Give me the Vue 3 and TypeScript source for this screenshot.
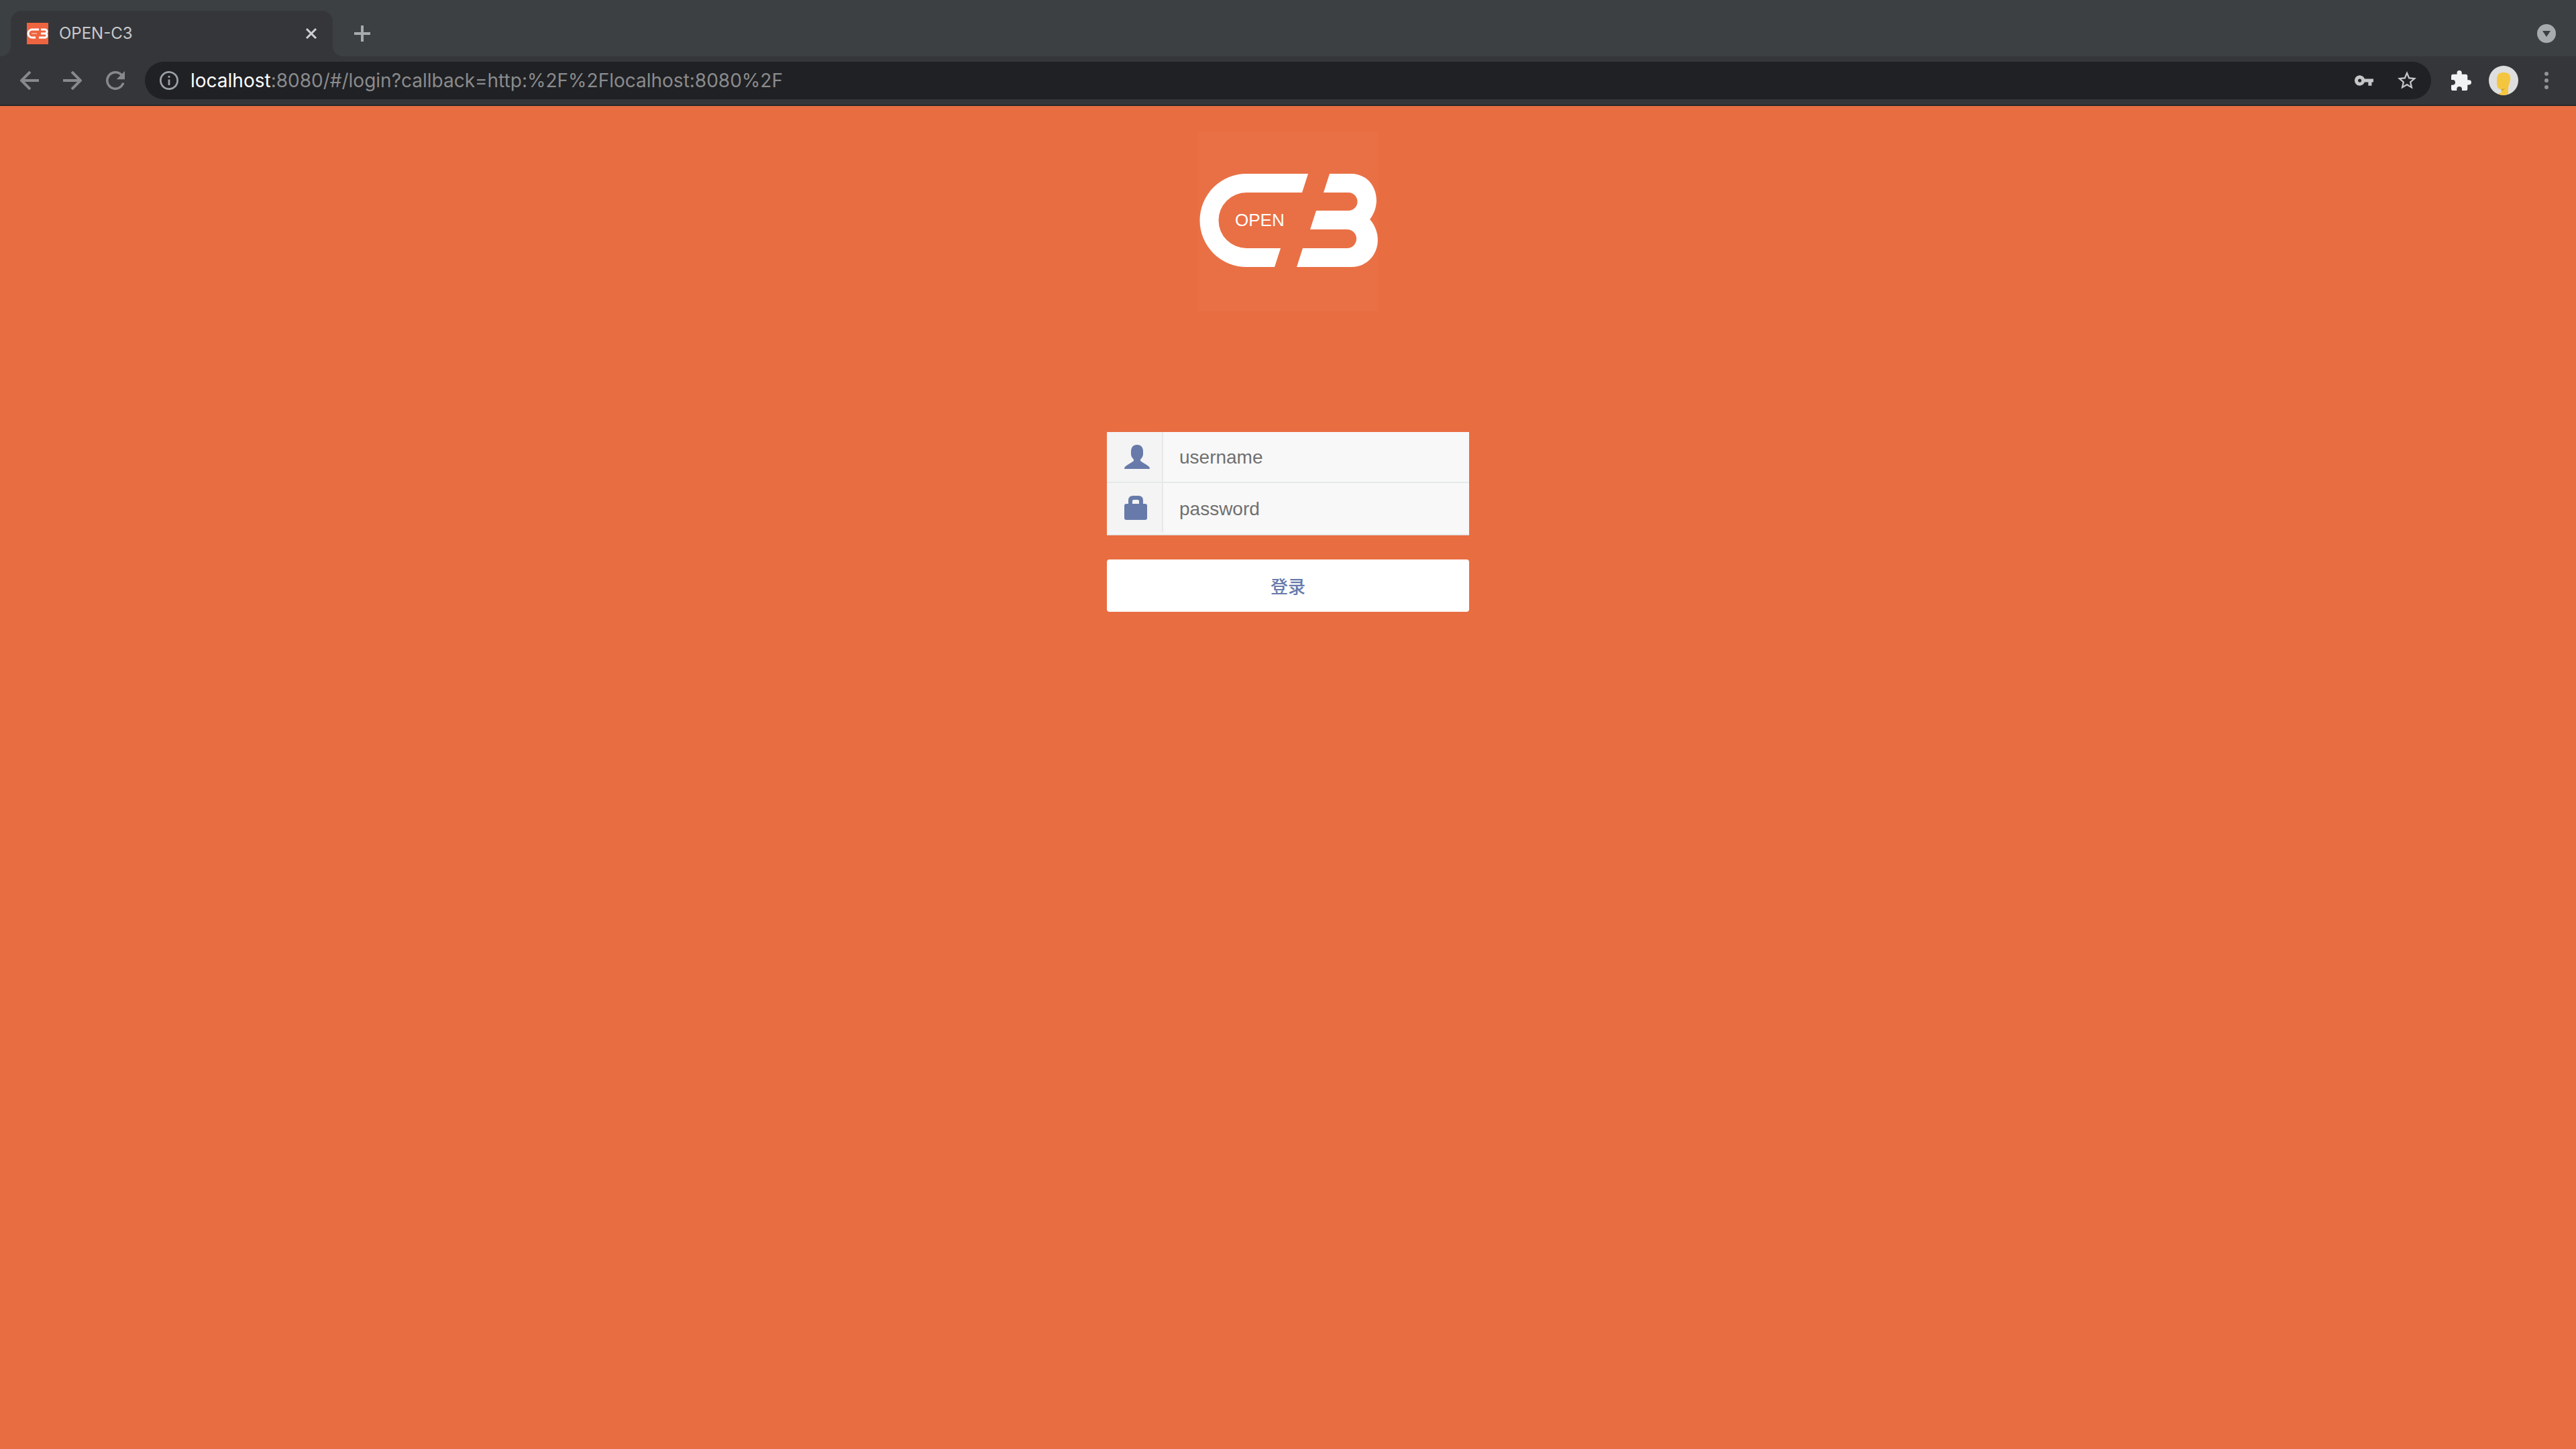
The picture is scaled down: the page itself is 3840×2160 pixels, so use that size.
<script setup lang="ts">
import { ref } from 'vue'

const username = ref('')
const password = ref('')
</script>

<template>
  <div class="window">
    <header class="chrome">
      <div class="tabs">
        <div class="tab">
          <svg class="favicon" viewBox="0 0 32 32" aria-hidden="true">
            <rect width="32" height="32" fill="#ee6440" />
            <path d="M18 10H8a6 6 0 0 0 0 12h5M21 10h6a3 3 0 0 1 0 6h-6M27 16a3 3 0 0 1 0 6h-9" fill="none" stroke="#fff" stroke-width="3" />
            <path d="M7 16h8" stroke="#f6a48c" stroke-width="2" />
          </svg>
          <span class="tab-title">OPEN-C3</span>
          <button class="icon-button close" type="button" aria-label="Close tab">
            <svg width="20" height="20" viewBox="0 0 20 20"><path d="M3 3l14 14M17 3L3 17" stroke="#d0d1d3" stroke-width="3" /></svg>
          </button>
        </div>
        <button class="icon-button new-tab" type="button" aria-label="New tab">
          <svg width="24" height="24" viewBox="0 0 24 24"><path d="M12 0v24M0 12h24" stroke="#a7abae" stroke-width="4" /></svg>
        </button>
        <button class="icon-button tab-search" type="button" aria-label="Search tabs">
          <svg width="28" height="28" viewBox="0 0 28 28"><circle cx="14" cy="14" r="14" fill="#a7abae" /><path d="M8 10h12l-6 9z" fill="#3c4043" /></svg>
        </button>
      </div>
      <div class="toolbar">
        <nav class="history">
          <button class="icon-button" type="button" aria-label="Back">
            <svg width="28" height="28" viewBox="0 0 28 28"><path d="M28 14H3M15 1L2 14l13 13" fill="none" stroke="#88898b" stroke-width="4" /></svg>
          </button>
          <button class="icon-button" type="button" aria-label="Forward">
            <svg width="28" height="28" viewBox="0 0 28 28"><path d="M0 14h25M13 1l13 13-13 13" fill="none" stroke="#88898b" stroke-width="4" /></svg>
          </button>
          <button class="icon-button" type="button" aria-label="Reload">
            <svg width="28" height="28" viewBox="4 4 16 16"><path d="M17.65 6.35A7.96 7.96 0 0 0 12 4a8 8 0 1 0 7.73 10h-2.08A6 6 0 1 1 12 6c1.66 0 3.14.69 4.22 1.78L13 11h7V4z" fill="#88898b" /></svg>
          </button>
        </nav>
        <div class="omnibox">
          <svg width="28" height="28" viewBox="2 2 20 20" aria-hidden="true"><path d="M11 7h2v2h-2zm0 4h2v6h-2zm1-9a10 10 0 1 0 0 20 10 10 0 0 0 0-20zm0 18a8 8 0 1 1 0-16 8 8 0 0 1 0 16z" fill="#9aa0a6" /></svg>
          <span class="url"><span class="host">localhost</span>:8080/#/login?callback=http:%2F%2Flocalhost:8080%2F</span>
          <button class="icon-button" type="button" aria-label="Saved passwords">
            <svg width="28" height="28" viewBox="1 1 22 22"><path d="M12.65 10A6 6 0 1 0 12.65 14H17v4h4v-4h2v-4zM7 14a2 2 0 1 1 0-4 2 2 0 0 1 0 4z" fill="#c5c6c8" /></svg>
          </button>
          <button class="icon-button" type="button" aria-label="Bookmark this page">
            <svg width="28" height="28" viewBox="2 2 20 20"><path d="M22 9.24l-7.19-.62L12 2 9.19 8.63 2 9.24l5.46 4.73L5.82 21 12 17.27 18.18 21l-1.63-7.03zM12 15.4l-3.76 2.27 1-4.28-3.32-2.88 4.38-.38L12 6.1l1.71 4.04 4.38.38-3.32 2.88 1 4.28z" fill="#c5c6c8" /></svg>
          </button>
        </div>
        <div class="actions">
          <button class="icon-button" type="button" aria-label="Extensions">
            <svg width="30" height="30" viewBox="2 1 21 21"><path d="M20.5 11H19V7a2 2 0 0 0-2-2h-4V3.500a2.500 2.500 0 0 0-5 0V5H4a2 2 0 0 0-2 2v3.800h1.500a2.700 2.700 0 0 1 0 5.400H2V20a2 2 0 0 0 2 2h3.800v-1.500a2.700 2.700 0 0 1 5.400 0V22H17a2 2 0 0 0 2-2v-4h1.500a2.500 2.500 0 0 0 0-5z" fill="#f1f3f4" /></svg>
          </button>
          <button class="icon-button" type="button" aria-label="Profile">
            <svg width="44" height="44" viewBox="0 0 44 44">
              <circle cx="22" cy="22" r="22" fill="#dedede" />
              <path d="M14 42q2-2 5-2v-5h-2c-4-1-5-5-5-11 0-9 1-14 10-14 8 0 11 4 10 11-1 6-3 9-3 14v7q-8 4-15 0z" fill="#f4c63f" />
              <path d="M18 35q4 0 6-2-1 4-5 5z" fill="#d7a92e" />
            </svg>
          </button>
          <button class="icon-button" type="button" aria-label="Menu">
            <svg width="8" height="28" viewBox="0 0 8 28" fill="#929395"><circle cx="4" cy="4" r="3" /><circle cx="4" cy="14" r="3" /><circle cx="4" cy="24" r="3" /></svg>
          </button>
        </div>
      </div>
    </header>

    <main class="page">
      <svg class="logo" viewBox="0 0 268 268" role="img" aria-label="OPEN C3">
        <rect width="268" height="268" fill="#e97045" />
        <g fill="#fff">
          <path d="M164 63H72a69 69 0 0 0 0 139h42l9-28H72a41 41 0 0 1 0-83h83z" />
          <path d="M196 63h32c35 0 49 41 28 68c25 29 8 71-28 71h-81l9-28h66a14 14 0 0 0 0-28h-55l9-28h48a13 13 0 0 0 0-27h-37z" />
          <text x="55" y="141" font-size="26">OPEN</text>
        </g>
      </svg>
      <form class="login" @submit.prevent>
        <div class="fields">
          <div class="field">
            <label for="username" aria-label="username">
              <svg width="38" height="36" viewBox="0 0 38 36"><path d="M19 0c6 0 9 4 9 10v4c0 3-2 6-4 8v2c3 3 9 5 12 8q2 1 2 4H0q0-3 2-4c3-3 9-5 12-8v-2c-2-2-4-5-4-8v-4c0-6 3-10 9-10z" fill="#677aaa" /></svg>
            </label>
            <input id="username" v-model="username" type="text" placeholder="username" />
          </div>
          <div class="field">
            <label for="password" aria-label="password">
              <svg width="38" height="36" viewBox="0 0 38 36"><path fill-rule="evenodd" d="M6 12V7q0-7 7-7h8q7 0 7 7v5h3q3 0 3 3v18q0 3-3 3H3q-3 0-3-3V15q0-3 3-3zm6 0h10V8q0-2-2-2h-6q-2 0-2 2z" fill="#677aaa" /></svg>
            </label>
            <input id="password" v-model="password" type="password" placeholder="password" />
          </div>
        </div>
        <button class="submit" type="submit">登录</button>
      </form>
    </main>
  </div>
</template>

<style>
body {
  background: #e86d41;
}
</style>

<style scoped>
.window {
  min-height: 100vh;
  display: flex;
  flex-direction: column;
  background: #e86d41;
}
.window svg {
  display: block;
  flex: none;
}
.icon-button {
  display: flex;
  flex: none;
  padding: 0;
  border: 0;
  background: none;
}
.chrome {
  font-family: Inter, Roboto, sans-serif;
  background: #35363a;
  border-bottom: 2px solid #28292c;
}
.tabs {
  display: flex;
  align-items: center;
  height: 84px;
  box-sizing: border-box;
  padding: 16px 30px 0 16px;
  background: #3c4043;
}
.tab {
  position: relative;
  display: flex;
  align-items: center;
  width: 480px;
  height: 68px;
  box-sizing: border-box;
  padding: 0 22px 0 24px;
  border-radius: 16px 16px 0 0;
  background: #35363a;
}
.tab::before,
.tab::after {
  content: "";
  position: absolute;
  bottom: 0;
  width: 16px;
  height: 16px;
}
.tab::before {
  right: 100%;
  background: radial-gradient(circle at 0 0, #3c4043 16px, #35363a 16px);
}
.tab::after {
  left: 100%;
  background: radial-gradient(circle at 100% 0, #3c4043 16px, #35363a 16px);
}
.favicon {
  width: 32px;
  height: 32px;
}
.tab-title {
  flex: 1;
  margin-left: 16px;
  font-size: 24px;
  line-height: 32px;
  color: #c8c9cb;
}
.new-tab {
  margin-left: 32px;
}
.tab-search {
  margin-left: auto;
}
.toolbar {
  display: flex;
  align-items: center;
  padding: 8px 40px 8px 30px;
}
.history {
  display: flex;
  gap: 36px;
  margin-right: 30px;
}
.omnibox {
  flex: 1;
  display: flex;
  align-items: center;
  gap: 36px;
  height: 56px;
  box-sizing: border-box;
  padding: 0 22px;
  border-radius: 28px;
  background: #202124;
}
.url {
  flex: 1;
  margin-left: -18px;
  font-size: 28px;
  line-height: 36px;
  white-space: nowrap;
  color: #8a8b8d;
}
.host {
  color: #fff;
}
.actions {
  display: flex;
  align-items: center;
  gap: 26px;
  margin-left: 30px;
}
.actions .icon-button:last-child {
  margin-left: 12px;
}
.page {
  flex: 1;
  display: flex;
  flex-direction: column;
  align-items: center;
  padding: 38px 0;
}
.logo {
  width: 268px;
  height: 268px;
  font-family: "Liberation Sans", sans-serif;
}
.login {
  width: 540px;
  max-width: 100%;
  margin-top: 180px;
}
.fields {
  background: #f8f8f8;
}
.field {
  display: flex;
  height: 76px;
  box-sizing: border-box;
  border-bottom: 2px solid #e6e9e9;
}
.field:last-child {
  height: 78px;
}
.field label {
  display: flex;
  align-items: center;
  width: 84px;
  box-sizing: border-box;
  padding-left: 26px;
  background: #f4f4f4;
  border-right: 2px solid #e6e9e9;
}
.field:last-child label {
  height: 74px;
}
.field input {
  flex: 1;
  min-width: 0;
  padding: 2px 24px 0;
  border: 0;
  outline: 0;
  background: none;
  font: 28px "Liberation Sans", sans-serif;
  color: #333;
}
.field input::placeholder {
  color: #707070;
  opacity: 1;
}
.submit {
  display: block;
  width: 100%;
  height: 78px;
  margin-top: 36px;
  padding: 0 0 2px;
  border: 0;
  border-radius: 4px;
  background: #fff;
  font: 500 26px "Noto Sans CJK SC", sans-serif;
  color: #677aaa;
}
</style>
